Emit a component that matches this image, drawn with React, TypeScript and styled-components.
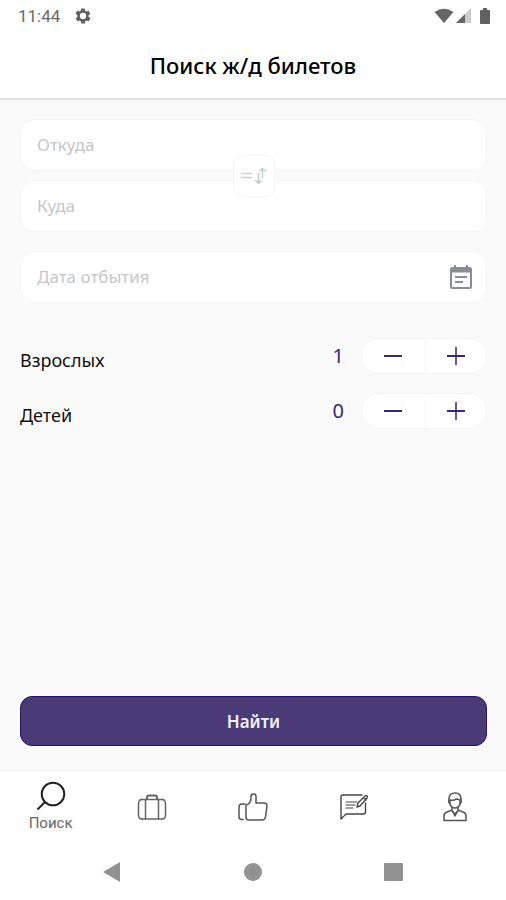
import React, { useState } from "react";
import styled, { createGlobalStyle } from "styled-components";

const GlobalStyle = createGlobalStyle`
  *, *::before, *::after { box-sizing: border-box; }
  body {
    margin: 0;
    background: #fff;
    color: #111;
    font-family: "Noto Sans", "Open Sans", sans-serif;
  }
  button, input { font: inherit; color: inherit; }
  button { padding: 0; border: 0; background: none; cursor: pointer; }
  svg { display: block; }
`;

const Screen = styled.div`
  display: flex;
  flex-direction: column;
  min-height: 100vh;
`;

const StatusBar = styled.div`
  display: flex;
  align-items: center;
  justify-content: space-between;
  height: 32px;
  padding: 0 16px 0 18px;
  font-family: Roboto, sans-serif;
  font-size: 17px;
  color: #6a6a6a;
`;

const StatusGroup = styled.div<{ $gap: number }>`
  display: flex;
  align-items: center;
  gap: ${(p) => p.$gap}px;
`;

const Header = styled.header`
  display: flex;
  align-items: center;
  justify-content: center;
  height: 68px;
  border-bottom: 2px solid #e2e2e2;
`;

const Title = styled.h1`
  margin: 0;
  font-size: 22px;
  line-height: 30px;
  font-weight: 500;
  color: #000;
`;

const Main = styled.main`
  display: flex;
  flex: 1;
  flex-direction: column;
  padding: 19px 19px 24px 20px;
  background: #fafafa;
`;

const Form = styled.form`
  display: flex;
  flex: 1;
  flex-direction: column;
`;

const Route = styled.div`
  position: relative;
  display: flex;
  flex-direction: column;
  gap: 9px;
  margin-bottom: 19px;
`;

const Field = styled.label`
  display: flex;
  align-items: center;
  height: 52px;
  padding: 0 14px 0 16px;
  border: 1px solid #f4f4f4;
  border-radius: 14px;
  background: #fff;
`;

const TextInput = styled.input`
  flex: 1;
  min-width: 0;
  padding: 0;
  border: 0;
  outline: 0;
  background: none;
  font-size: 17px;
  line-height: 24px;
  &::placeholder { color: #c6c6c6; opacity: 1; }
`;

const SwapButton = styled.button`
  position: absolute;
  top: 50%;
  left: 50%;
  display: grid;
  place-items: center;
  width: 42px;
  height: 42px;
  transform: translate(-50%, -50%);
  && {
    border: 1px solid #f4f4f4;
    border-radius: 9px;
    background: #fff;
  }
`;

const Counters = styled.div`
  display: flex;
  flex-direction: column;
  gap: 19px;
  margin-top: 35px;
`;

const CounterRow = styled.div`
  display: flex;
  align-items: center;
  height: 36px;
`;

const CounterLabel = styled.span`
  flex: 1;
  padding-top: 8px;
  font-size: 18px;
  line-height: 24px;
`;

const CounterValue = styled.output`
  margin-right: 17px;
  font-size: 20px;
  line-height: 24px;
  color: #372672;
`;

const Stepper = styled.div`
  display: grid;
  grid-template-columns: 1fr 1fr;
  width: 126px;
  height: 36px;
  border: 1px solid #f3f3f3;
  border-radius: 18px;
  background: #fff;
`;

const StepButton = styled.button`
  display: grid;
  place-items: center;
  color: #372672;
  & + & { border-left: 1px solid #f8f8f8; }
`;

const Submit = styled.button`
  && {
    height: 50px;
    margin-top: auto;
    border: 1px solid #2a145f;
    border-radius: 12px;
    background: #4a3a78;
    color: #f4f0fb;
    font-size: 17px;
    font-weight: 600;
  }
`;

const TabBar = styled.nav`
  display: flex;
  height: 73px;
  border-top: 1px solid #f3f3f3;
`;

const Tab = styled.a`
  display: flex;
  flex: 1;
  flex-direction: column;
  align-items: center;
  justify-content: center;
  gap: 2px;
  color: #444;
  text-decoration: none;
`;

const TabLabel = styled.span`
  font-family: Roboto, sans-serif;
  font-size: 15px;
  line-height: 20px;
  color: #666;
`;

const SystemBar = styled.div`
  display: flex;
  align-items: center;
  justify-content: center;
  gap: 117px;
  height: 57px;
`;

const SystemButton = styled.button`
  && { color: #929292; }
`;

const GearIcon = () => (
  <svg width="18" height="18" viewBox="0 0 24 24" fill="#606060">
    <path
      fillRule="evenodd"
      d="M19.4 13a7.5 7.5 0 0 0 0-2l2.1-1.6a.5.5 0 0 0 .1-.6l-2-3.5a.5.5 0 0 0-.6-.2l-2.5 1a7.3 7.3 0 0 0-1.7-1l-.4-2.6a.5.5 0 0 0-.5-.5h-4a.5.5 0 0 0-.5.5L9 5.1a7.3 7.3 0 0 0-1.7 1l-2.5-1a.5.5 0 0 0-.6.2l-2 3.5a.5.5 0 0 0 .1.6L4.6 11a7.5 7.5 0 0 0 0 2l-2.1 1.6a.5.5 0 0 0-.1.6l2 3.5a.5.5 0 0 0 .6.2l2.5-1a7.3 7.3 0 0 0 1.7 1l.4 2.6a.5.5 0 0 0 .5.5h4a.5.5 0 0 0 .5-.5l.4-2.6a7.3 7.3 0 0 0 1.7-1l2.5 1a.5.5 0 0 0 .6-.2l2-3.5a.5.5 0 0 0-.1-.6L19.4 13ZM12 16.200a4.200 4.200 0 1 1 0-8.400 4.200 4.200 0 0 1 0 8.400Z"
    />
  </svg>
);

const WifiIcon = () => (
  <svg width="20" height="16" viewBox="0 0 20 16" fill="#666">
    <path d="M0.5 4Q10-2.500 19.5 4L10 15Z" />
  </svg>
);

const SignalIcon = () => (
  <svg width="15" height="16" viewBox="0 0 15 16">
    <path d="M0 15L15 0V15Z" fill="#ccc" />
    <path d="M0 15L9 6V15Z" fill="#666" />
  </svg>
);

const BatteryIcon = () => (
  <svg width="10" height="16" viewBox="0 0 10 16" fill="#606060">
    <path d="M3 0h4v2h2q1 0 1 1v12q0 1-1 1H1q-1 0-1-1V3q0-1 1-1h2Z" />
  </svg>
);

const SwapIcon = () => (
  <svg width="28" height="18" viewBox="0 0 28 18" fill="none">
    <path d="M1 6.500h11M1 10.500h11" stroke="#ccd0d2" strokeWidth="1.500" />
    <path d="M22.500 11V1.500M19.500 4.500l3-3 3.500 3" stroke="#b5d3d0" strokeWidth="1.400" />
    <path d="M18.500 6v10.500M15 13l3.500 3.500 3-3.500" stroke="#bccbc9" strokeWidth="1.400" />
  </svg>
);

const CalendarIcon = () => (
  <svg width="22" height="24" viewBox="0 0 22 24" fill="none" stroke="#8b8d95">
    <rect x="1" y="3" width="20" height="20" rx="1.500" strokeWidth="2" />
    <path d="M1 5.500h20" strokeWidth="4" />
    <path d="M5 0v4M17 0v4M5 12h12M5 17h8" strokeWidth="2" />
  </svg>
);

const MinusIcon = () => (
  <svg width="18" height="18" viewBox="0 0 18 18" stroke="currentColor" strokeWidth="2">
    <path d="M0 9h18" />
  </svg>
);

const PlusIcon = () => (
  <svg width="18" height="18" viewBox="0 0 18 18" stroke="currentColor" strokeWidth="2">
    <path d="M9 0v18" stroke="#665c91" />
    <path d="M0 9h18" />
  </svg>
);

const SearchIcon = () => (
  <svg width="30" height="30" viewBox="0 0 30 30" fill="none" stroke="#222" strokeWidth="2">
    <circle cx="17" cy="13" r="11.300" />
    <path d="M9 21l-7.500 7.500" />
  </svg>
);

const SuitcaseIcon = () => (
  <svg width="30" height="26" viewBox="0 0 30 26" fill="none" stroke="#666" strokeWidth="1.500">
    <path d="M4 5.500h22M4 25h22" />
    <path d="M8.500 5.500v19.500M21.500 5.500v19.500" />
    <path d="M5 5.500Q1.500 5.500 1.500 10v11q0 4 3.500 4M25 5.500q3.500 0 3.500 4.500v11q0 4-3.500 4" />
    <path d="M10 5.500V3.500q0-2 2-2h6q2 0 2 2v2" strokeWidth="2" />
  </svg>
);

const ThumbIcon = () => (
  <svg width="30" height="28" viewBox="0 0 30 28" fill="none" stroke="#555" strokeWidth="1.500" strokeLinejoin="round" strokeLinecap="round">
    <path d="M5 26.500H3.500Q1 26.500 1 24V14q0-3 3-3h3" />
    <path d="M8 12q5-1 5-7V3.500Q13 1 15.500 1T18 3.500V10h8q3 0 3 3l-1.500 11q-.5 3-3.500 3H11q-3 0-3-3V12" />
  </svg>
);

const MessageIcon = () => (
  <svg width="30" height="28" viewBox="0 0 30 28" fill="none" stroke="#444" strokeWidth="1.400" strokeLinejoin="round" strokeLinecap="round">
    <path d="M23 2H4Q2 2 2 4v22l5-5h17q2.500 0 2.500-2V10" />
    <path d="M7 9h11M7 12h9M7 15h7" strokeWidth="1.200" />
    <path d="M18 14l1-4 7-7q1-1 2 0t0 2l-7 8ZM24.500 4.500l2.500 2.500" />
  </svg>
);

const PersonIcon = () => (
  <svg width="24" height="30" viewBox="0 0 24 30" fill="none" stroke="#555" strokeWidth="1.500" strokeLinejoin="round">
    <path d="M6 7q0-6 6-6t6 6q1 3-1 5-1 4-5 4t-5-4q-2-2-1-5Z" />
    <path d="M7 12V8q4 1 6-1 2 0 4 1v4" />
    <path d="M9 15v3l3 6 3-6v-3" />
    <path d="M9 18l-5 2q-3 1-3 4v4.500h22V24q0-3-3-4l-5-2" />
    <path d="M9 19l3 3 3-3" />
  </svg>
);

interface CounterProps {
  id: string;
  label: string;
  initial: number;
}

function Counter({ id, label, initial }: CounterProps) {
  const [value, setValue] = useState(initial);
  return (
    <CounterRow role="group" aria-labelledby={id}>
      <CounterLabel id={id}>{label}</CounterLabel>
      <CounterValue>{value}</CounterValue>
      <Stepper>
        <StepButton type="button" aria-label="Уменьшить" onClick={() => setValue(Math.max(0, value - 1))}>
          <MinusIcon />
        </StepButton>
        <StepButton type="button" aria-label="Увеличить" onClick={() => setValue(value + 1)}>
          <PlusIcon />
        </StepButton>
      </Stepper>
    </CounterRow>
  );
}

export default function App() {
  const [from, setFrom] = useState("");
  const [to, setTo] = useState("");
  const swap = () => {
    setFrom(to);
    setTo(from);
  };
  return (
    <Screen>
      <GlobalStyle />
      <StatusBar>
        <StatusGroup $gap={14}>
          <span>11:44</span>
          <GearIcon />
        </StatusGroup>
        <StatusGroup $gap={2}>
          <WifiIcon />
          <StatusGroup $gap={9}>
            <SignalIcon />
            <BatteryIcon />
          </StatusGroup>
        </StatusGroup>
      </StatusBar>
      <Header>
        <Title>Поиск ж/д билетов</Title>
      </Header>
      <Main>
        <Form onSubmit={(e) => e.preventDefault()}>
          <Route>
            <Field>
              <TextInput aria-label="Откуда" placeholder="Откуда" value={from} onChange={(e) => setFrom(e.target.value)} />
            </Field>
            <Field>
              <TextInput aria-label="Куда" placeholder="Куда" value={to} onChange={(e) => setTo(e.target.value)} />
            </Field>
            <SwapButton type="button" aria-label="Поменять местами" onClick={swap}>
              <SwapIcon />
            </SwapButton>
          </Route>
          <Field>
            <TextInput aria-label="Дата отбытия" placeholder="Дата отбытия" />
            <CalendarIcon />
          </Field>
          <Counters>
            <Counter id="adults" label="Взрослых" initial={1} />
            <Counter id="children" label="Детей" initial={0} />
          </Counters>
          <Submit type="submit">Найти</Submit>
        </Form>
      </Main>
      <TabBar>
        <Tab href="#search" aria-current="page">
          <SearchIcon />
          <TabLabel>Поиск</TabLabel>
        </Tab>
        <Tab href="#trips" aria-label="Поездки"><SuitcaseIcon /></Tab>
        <Tab href="#likes" aria-label="Рекомендации"><ThumbIcon /></Tab>
        <Tab href="#messages" aria-label="Сообщения"><MessageIcon /></Tab>
        <Tab href="#profile" aria-label="Профиль"><PersonIcon /></Tab>
      </TabBar>
      <SystemBar>
        <SystemButton type="button" aria-label="Назад">
          <svg width="24" height="20" viewBox="0 0 24 20" fill="currentColor"><path d="M3 10L20 0v20Z" /></svg>
        </SystemButton>
        <SystemButton type="button" aria-label="Домой">
          <svg width="24" height="20" viewBox="0 0 24 20" fill="currentColor"><circle cx="12" cy="10" r="9" /></svg>
        </SystemButton>
        <SystemButton type="button" aria-label="Недавние">
          <svg width="24" height="20" viewBox="0 0 24 20" fill="currentColor"><rect x="2" y="1" width="19" height="18" rx="1" /></svg>
        </SystemButton>
      </SystemBar>
    </Screen>
  );
}
